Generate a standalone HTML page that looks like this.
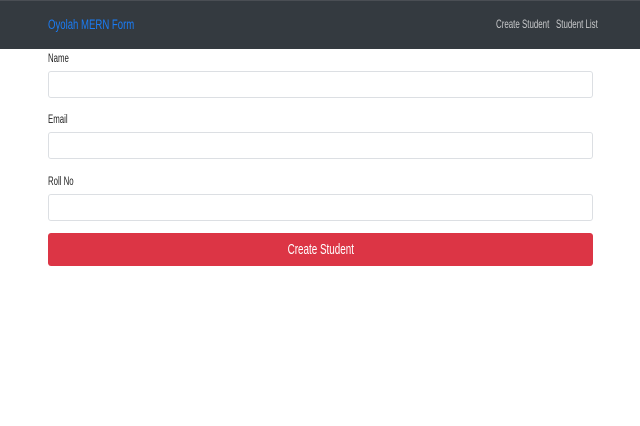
<!DOCTYPE html>
<html><head><style>
body{margin:0;width:640px;height:426px;background:#fff;font-family:"Liberation Sans",sans-serif;overflow:hidden;position:relative}
.nav{position:absolute;left:0;top:0;width:640px;height:48px;background:#343a40;border-top:1px solid #4a4e54}
.t{position:absolute;white-space:nowrap;transform-origin:left center}
.brand{left:48px;top:16px;font-size:13.5px;color:#1a7cf5;transform:scaleX(0.71)}
.link{top:16px;font-size:12px;color:#c8c9cb;transform:scaleX(0.66)}
.lab{left:48px;font-size:11.5px;color:#222;transform:scaleX(0.68)}
.in{position:absolute;left:48px;width:543px;height:25px;border:1px solid #dcdfe3;border-radius:3px;background:#fff}
.btn{position:absolute;left:48px;top:233px;width:545px;height:33px;background:#dc3545;border-radius:3px;color:#fff;font-size:14.5px;text-align:center;line-height:35px}
</style></head><body>
<div class="nav">
<div class="t brand">Oyolah MERN Form</div>
<div class="t link" style="left:496px">Create Student</div>
<div class="t link" style="left:556px">Student List</div>
</div>
<div class="t lab" style="top:53px">Name</div>
<div class="in" style="top:71px"></div>
<div class="t lab" style="top:114px">Email</div>
<div class="in" style="top:132px"></div>
<div class="t lab" style="top:176px">Roll No</div>
<div class="in" style="top:194px"></div>
<div class="btn"><span style="display:inline-block;transform:scaleX(0.68)">Create Student</span></div>
</body></html>
